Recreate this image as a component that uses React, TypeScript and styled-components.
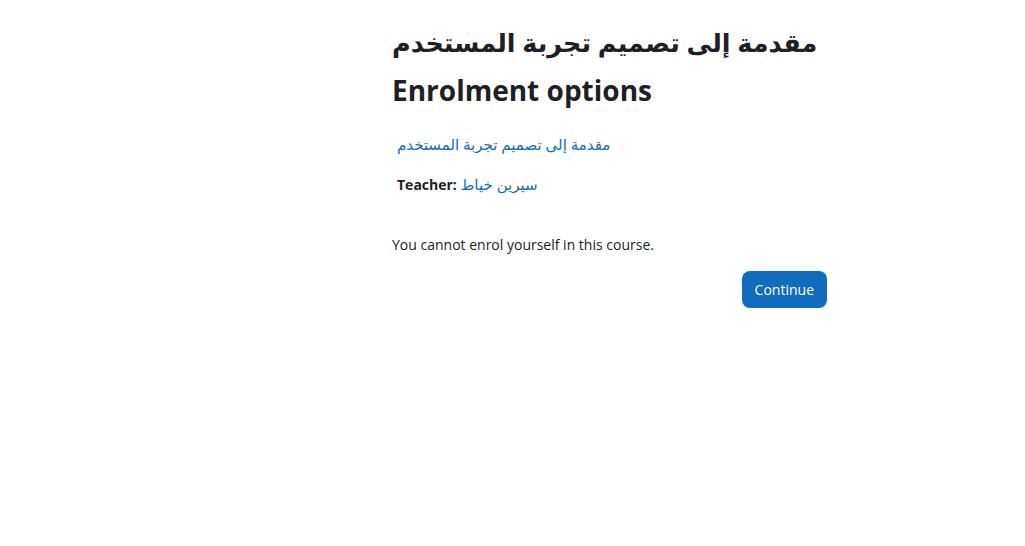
import React from "react";
import styled, { createGlobalStyle } from "styled-components";

const Global = createGlobalStyle`
  html, body { margin: 0; padding: 0; background: #fff; }
  body {
    font-family: "Open Sans", "Noto Sans", "DejaVu Sans", sans-serif;
    color: #1d2125;
    font-size: 14px;
  }
`;

const Page = styled.div`
  display: flex;
  padding: 24px 0 0 392px;
`;

const Main = styled.main`
  width: 435px;
  display: flex;
  flex-direction: column;
`;

const Title = styled.h1`
  margin: 0;
  font-size: 25.5px;
  font-weight: 700;
  line-height: 36px;
  white-space: nowrap;
  text-align: left;
`;

const Subtitle = styled.h2`
  margin: 13px 0 0;
  font-size: 28px;
  font-weight: 700;
  line-height: 34px;
`;

const CourseBox = styled.div`
  padding: 0 5px;
  margin-top: 26px;
  display: flex;
  flex-direction: column;
  gap: 18px;
`;

const Link = styled.a`
  color: #0f6cbf;
  text-decoration: none;
  font-size: 15px;
  line-height: 22px;
`;

const Contact = styled.div`
  font-size: 14px;
  line-height: 22px;
`;

const Label = styled.span`
  font-weight: 700;
`;

const Message = styled.p`
  margin: 38px 0 0;
  font-size: 14px;
  line-height: 22px;
`;

const Actions = styled.div`
  display: flex;
  justify-content: flex-end;
  margin-top: 15px;
`;

const Button = styled.button`
  background: #0f6cbf;
  color: #fff;
  border: none;
  border-radius: 8px;
  height: 37px;
  padding: 0 13px;
  font-family: inherit;
  font-size: 14px;
  cursor: pointer;
`;

export default function App() {
  return (
    <>
      <Global />
      <Page>
        <Main>
          <Title>مقدمة إلى تصميم تجربة المستخدم</Title>
          <Subtitle>Enrolment options</Subtitle>
          <CourseBox>
            <Link href="#">مقدمة إلى تصميم تجربة المستخدم</Link>
            <Contact>
              <Label>Teacher:</Label> <Link href="#">سيرين خياط</Link>
            </Contact>
          </CourseBox>
          <Message>You cannot enrol yourself in this course.</Message>
          <Actions>
            <Button>Continue</Button>
          </Actions>
        </Main>
      </Page>
    </>
  );
}
